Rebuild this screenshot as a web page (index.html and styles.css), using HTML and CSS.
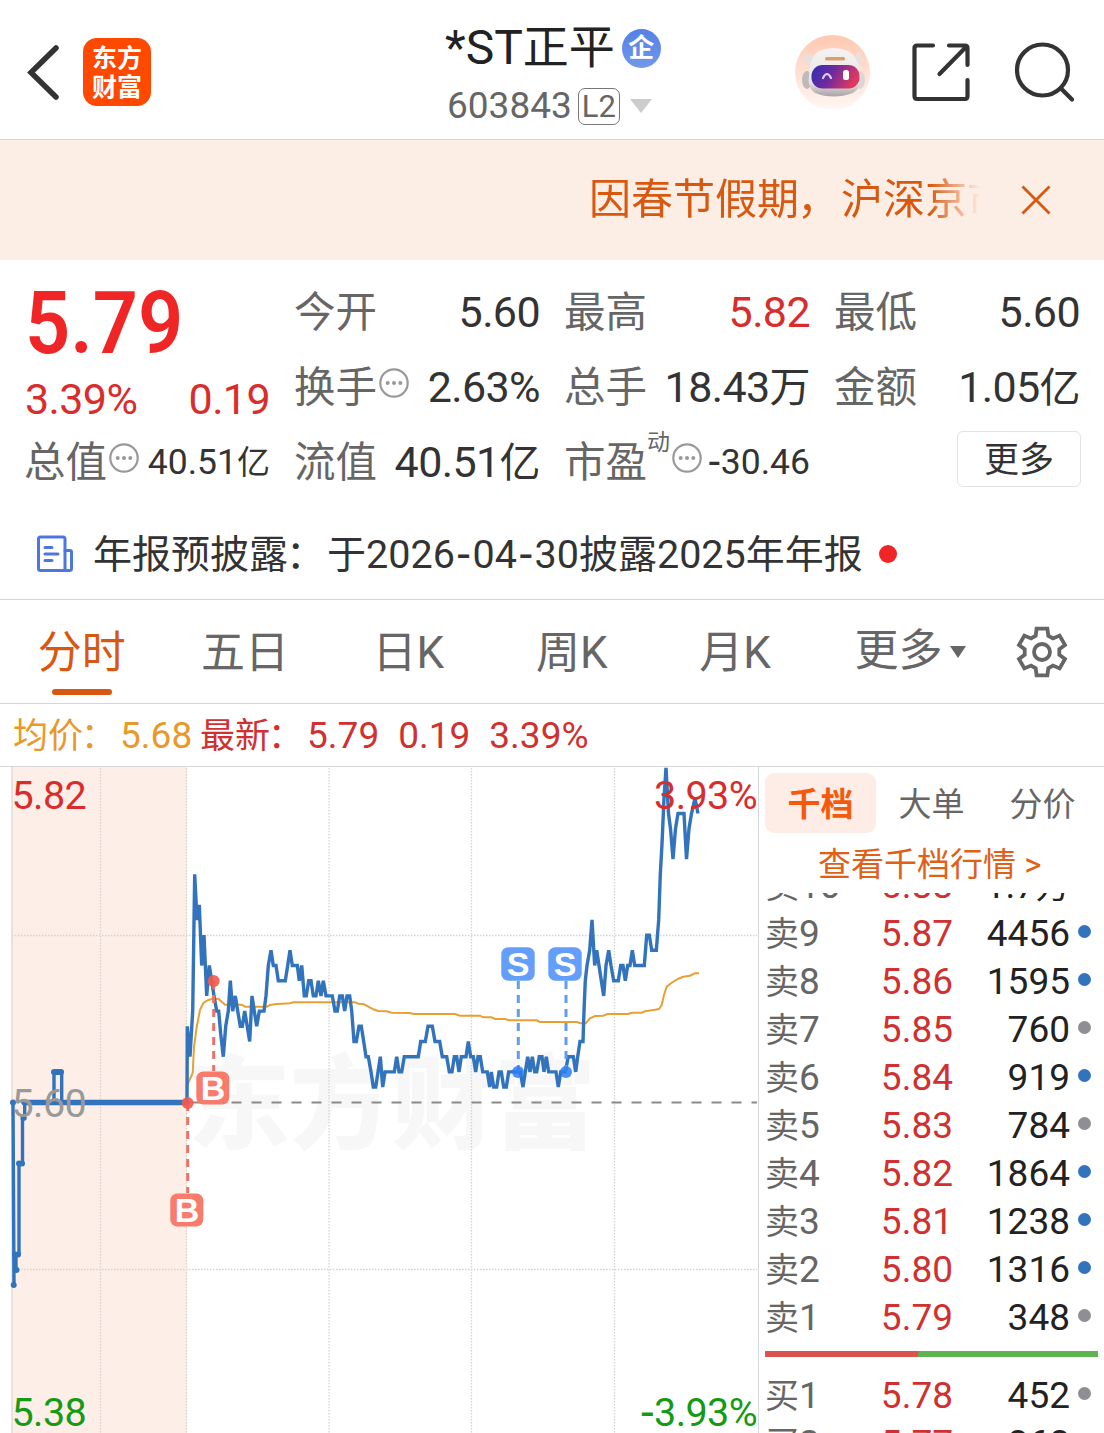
FILE: index.html
```html
<!DOCTYPE html>
<html lang="zh-CN">

<head>
  <meta charset="UTF-8" />
  <meta name="viewport" content="width=device-width, initial-scale=1.0" />
  <title>*ST正平 603843</title>
  <link rel="stylesheet" href="styles.css">
</head>

<body>
  <svg class="defs" width="0" height="0">
    <symbol id="more-info" viewBox="0 0 30 30">
      <circle cx="15" cy="15" r="13.7" fill="none" stroke="#999" stroke-width="2.2" />
      <circle cx="8.7" cy="15" r="2" fill="#999" />
      <circle cx="15" cy="15" r="2" fill="#999" />
      <circle cx="21.3" cy="15" r="2" fill="#999" />
    </symbol>
  </svg>

  <header class="header">
    <div class="header-left">
      <svg class="back" width="40" height="60" viewBox="0 0 40 60">
        <path d="M31 6 L6 30.500 L31 55" fill="none" stroke="#333" stroke-width="5.500" stroke-linecap="round" />
      </svg>
      <div class="logo"><span>东方</span><span>财富</span></div>
    </div>
    <div class="header-title">
      <div class="name">*ST<span class="name-cn">正平</span><i class="badge">企</i></div>
      <div class="code">603843<span class="level">L2</span><i class="arrow"></i></div>
    </div>
    <div class="header-right">
      <svg width="75" height="75" viewBox="0 0 75 75">
        <defs>
          <linearGradient id="avatarBg" x1="0" y1="0" x2="0" y2="1">
            <stop offset="0" stop-color="#ffc8b0" />
            <stop offset="1" stop-color="#fff8f5" />
          </linearGradient>
          <linearGradient id="head" x1="0" y1="0" x2="0" y2="1">
            <stop offset="0" stop-color="#f6f3f3" />
            <stop offset=".7" stop-color="#e9e3e4" />
            <stop offset="1" stop-color="#aaa3a6" />
          </linearGradient>
          <linearGradient id="visor" x1="0" y1="0" x2="1" y2=".3">
            <stop offset="0" stop-color="#2b2fb5" />
            <stop offset=".5" stop-color="#6f2a9e" />
            <stop offset="1" stop-color="#e0385f" />
          </linearGradient>
        </defs>
        <circle cx="37.500" cy="37.500" r="37.500" fill="url(#avatarBg)" />
        <path d="M10 16 Q5 26 15 31 L23 21 Q12 23 10 16Z M63 16 Q70 25 62 31 L52 21 Q62 23 63 16Z" fill="#e8dfdf" />
        <ellipse cx="12" cy="45" rx="5" ry="9" fill="#bfb9bb" />
        <ellipse cx="65" cy="45" rx="5" ry="9" fill="#dcd5d7" />
        <path d="M14 40 Q15 21 24 16 Q38 10 53 16 Q63 21 66 40 Q67 53 58 58 Q38 65 20 58 Q12 53 14 40Z" fill="url(#head)" />
        <rect x="16.500" y="30" width="48" height="23.500" rx="11" fill="url(#visor)" />
        <rect x="30" y="22" width="20" height="3.500" rx="1.500" fill="#dba068" />
        <path d="M28 43 Q32 35 36 43" fill="none" stroke="#d7d2ff" stroke-width="2.200" stroke-linecap="round" />
        <rect x="48" y="35" width="6" height="10" rx="2.500" fill="#fff" />
      </svg>
      <svg width="60" height="60" viewBox="0 0 60 60" fill="none" stroke="#333" stroke-width="4.200" stroke-linecap="round" stroke-linejoin="round">
        <path d="M22 3.500 H6 Q3.500 3.500 3.500 6 V54 Q3.500 57 6 57 H54 Q56.500 57 56.500 54 V38" />
        <path d="M38 3.500 H54 Q56.500 3.500 56.500 6 V23 M55 5 L28.500 32" />
      </svg>
      <svg width="60" height="60" viewBox="0 0 60 60" fill="none" stroke="#333" stroke-width="4.200" stroke-linecap="round">
        <circle cx="28.500" cy="28" r="25.500" />
        <path d="M47 46.500 L58 57.500" />
      </svg>
    </div>
  </header>

  <div class="notice">
    <div class="notice-text">因春节假期<span class="punct">，</span>沪深京市场</div>
    <svg class="notice-close" width="30" height="30" viewBox="0 0 30 30">
      <path d="M1.500 1.500 L28.500 28.500 M28.500 1.500 L1.500 28.500" stroke="#d9580f" stroke-width="2.800" />
    </svg>
  </div>

  <section class="quote">
    <div class="price-box">
      <div class="price"><span>5.79</span></div>
      <div class="change"><span>3.39%</span><span>0.19</span></div>
    </div>
    <div class="stat"><label>今开</label><b>5.60</b></div>
    <div class="stat"><label>最高</label><b class="red">5.82</b></div>
    <div class="stat"><label>最低</label><b>5.60</b></div>
    <div class="stat"><label>换手</label><svg class="info"><use href="#more-info" /></svg><b>2.63%</b></div>
    <div class="stat"><label>总手</label><b>18.43<em>万</em></b></div>
    <div class="stat"><label>金额</label><b>1.05<em>亿</em></b></div>
    <div class="stat"><label>总值</label><svg class="info"><use href="#more-info" /></svg><b class="small">40.51<em>亿</em></b></div>
    <div class="stat"><label>流值</label><b>40.51<em>亿</em></b></div>
    <div class="stat"><label>市盈</label><sup>动</sup><svg class="info"><use href="#more-info" /></svg><b class="small"><span class="dash">-</span>30.46</b></div>
    <div class="more-cell"><button class="more-btn">更多</button></div>
  </section>

  <div class="report">
    <svg width="38" height="38" viewBox="0 0 38 38" fill="none" stroke="#4f76e0" stroke-width="3" stroke-linejoin="round" stroke-linecap="round">
      <path d="M4.500 2 H27 Q29 2 29 4 V35.500 H4.500 Q2.500 35.500 2.500 33.500 V4 Q2.500 2 4.500 2Z" />
      <path d="M29 15.500 H34 Q35.500 15.500 35.500 17 V33.500 Q35.500 35.500 33.500 35.500 H29" />
      <path d="M9 12.500 H16 M9 19 H22 M9 25.500 H16" />
    </svg>
    <p>年报预披露<span class="punct">：</span>于<b>2026<span class="dash">-</span>04<span class="dash">-</span>30</b>披露<b>2025</b>年年报</p>
    <i class="red-dot"></i>
  </div>

  <nav class="tabs">
    <a class="tab active">分时</a>
    <a class="tab">五日</a>
    <a class="tab">日K</a>
    <a class="tab">周K</a>
    <a class="tab">月K</a>
    <a class="tab tab-more">更多<i></i></a>
    <a class="setting">
      <svg width="56" height="56" viewBox="-28 -28 56 56" fill="none" stroke="#666" stroke-width="3.800">
        <path d="M-5.400 -23.400 H5.400 L6.300 -16.300 L11 -13.600 L17.600 -16.400 L23 -7 L17.300 -2.700 V2.700 L23 7 L17.600 16.400 L11 13.600 L6.300 16.300 L5.400 23.400 H-5.400 L-6.300 16.300 L-11 13.600 L-17.600 16.400 L-23 7 L-17.300 2.700 V-2.700 L-23 -7 L-17.600 -16.400 L-11 -13.600 L-6.300 -16.300Z" />
        <circle r="8" />
      </svg>
    </a>
  </nav>

  <div class="legend">
    <span class="avg"><em>均价<span class="punct">：</span></em>5.68</span>
    <span class="last"><em>最新<span class="punct">：</span></em>5.79</span>
    <span class="last">0.19</span>
    <span class="last">3.39%</span>
  </div>

  <main class="main">
    <svg class="chart" width="758" height="666" viewBox="0 767 758 666">
      <rect x="12" y="767" width="175" height="666" fill="#fdeee7" />
      <text class="watermark" x="188" y="1141">东方财富</text>
      <g class="grid">
        <path d="M100.500 768 V1433 M186.500 768 V1433 M329 768 V1433 M471.500 768 V1433 M614.500 768 V1433" />
        <path d="M12 935.500 H757 M12 1269.500 H757" />
      </g>
      <path d="M12 767 V1433" stroke="#dcdcdc" stroke-width="1.500" />
      <path d="M191.500 1102.500 H757" stroke="#8a8a8a" stroke-width="2" stroke-dasharray="10 10" />
      <path id="avgLine" class="avg-line" />
      <path class="pre-line" d="M13 1102 L14 1285 M14 1254 H18 M16 1254 V1270 M19 1254 V1163 H22.500 V1118 H24.700 V1102 H54 V1072 H61.700 V1102" />
      <path d="M24 1102.500 H187" stroke="#3273bd" stroke-width="5.500" stroke-linecap="round" />
      <g fill="#3273bd">
        <circle cx="13" cy="1102.500" r="3" /><circle cx="13.700" cy="1285" r="3" />
        <circle cx="15" cy="1254.500" r="3" /><circle cx="18" cy="1254.500" r="3" /><circle cx="16.500" cy="1270" r="3" />
        <circle cx="19" cy="1163.500" r="3" /><circle cx="22" cy="1163.500" r="3" /><circle cx="23.500" cy="1118" r="3" />
        <rect x="51" y="1069" width="13" height="6" rx="3" />
      </g>
      <path id="priceLine" class="price-line" />
      <g class="mark-buy">
        <path d="M213.700 981 V1071 M187.700 1103 V1193" />
        <circle cx="213.700" cy="981" r="6" /><circle cx="187.700" cy="1103" r="6" />
        <rect x="196.300" y="1071.500" width="33" height="33" rx="7" /><text x="213" y="1100">B</text>
        <rect x="170.300" y="1193.500" width="33" height="33" rx="7" /><text x="187" y="1222">B</text>
      </g>
      <g class="mark-sell">
        <path d="M518.300 981 V1072 M566 981 V1072" />
        <circle cx="518" cy="1072" r="6" /><circle cx="566" cy="1072" r="6" />
        <rect x="501.300" y="947.300" width="33.400" height="33.400" rx="7" /><text x="518" y="976">S</text>
        <rect x="548.300" y="947.300" width="33.400" height="33.400" rx="7" /><text x="565" y="976">S</text>
      </g>
      <g class="axis">
        <text x="11.500" y="809" fill="#d92c2c">5.82</text>
        <text x="11.500" y="1117" fill="#999">5.60</text>
        <text x="11.500" y="1426" fill="#159a15">5.38</text>
        <text x="757" y="809" fill="#d92c2c" text-anchor="end">3.93%</text>
        <text x="757" y="1426" fill="#159a15" text-anchor="end"><tspan class="dash">-</tspan>3.93%</text>
      </g>
    </svg>

    <aside class="book">
      <div class="book-tabs"><a class="on">千档</a><a>大单</a><a>分价</a></div>
      <a class="book-link">查看千档行情 &gt;</a>
      <div class="book-list">
        <div class="row first"><span>卖<u>10</u></span><b>5.88</b><b>1.7<em>万</em></b><i class="none"></i></div>
        <div class="row"><span>卖<u>9</u></span><b>5.87</b><b>4456</b><i class="blue"></i></div>
        <div class="row"><span>卖<u>8</u></span><b>5.86</b><b>1595</b><i class="blue"></i></div>
        <div class="row"><span>卖<u>7</u></span><b>5.85</b><b>760</b><i></i></div>
        <div class="row"><span>卖<u>6</u></span><b>5.84</b><b>919</b><i class="blue"></i></div>
        <div class="row"><span>卖<u>5</u></span><b>5.83</b><b>784</b><i></i></div>
        <div class="row"><span>卖<u>4</u></span><b>5.82</b><b>1864</b><i class="blue"></i></div>
        <div class="row"><span>卖<u>3</u></span><b>5.81</b><b>1238</b><i class="blue"></i></div>
        <div class="row"><span>卖<u>2</u></span><b>5.80</b><b>1316</b><i class="blue"></i></div>
        <div class="row"><span>卖<u>1</u></span><b>5.79</b><b>348</b><i></i></div>
        <div class="ratio"></div>
        <div class="row"><span>买<u>1</u></span><b>5.78</b><b>452</b><i></i></div>
        <div class="row"><span>买<u>2</u></span><b>5.77</b><b>868</b><i></i></div>
      </div>
    </aside>
  </main>

  <script>
    (function () {
      var BASE = 1102.3; // y of the previous close
      var STEP = 15.2; // height of 0.01

      // [x, cents above the previous close]
      var price = [
        [187, 0], [187.3, 5], [190, 3], [192.7, 6], [194.7, 15], [197, 12], [199.3, 13], [201.7, 9], [204, 11],
        [206.7, 7], [209.3, 9], [211.7, 8], [214, 7], [216.7, 6], [218.7, 6], [220.7, 4.5], [223.3, 3], [225.7, 5],
        [228.3, 6], [230.3, 8], [232.7, 6], [235.3, 7], [237.7, 6], [240.3, 5], [242.3, 5], [244.7, 6], [249.7, 4],
        [252, 7], [254.3, 6], [256.7, 5], [259.3, 6], [264, 6], [266, 7], [268.3, 9], [271, 10], [273.3, 9],
        [276, 9], [278.3, 8], [285.3, 8], [287.7, 9], [290, 10], [292.3, 9], [297.3, 9], [299.3, 8], [301.7, 9],
        [304.3, 7], [306.3, 7], [308.7, 8], [311, 8], [313.3, 7], [316, 7], [318.3, 8], [321, 7], [323.3, 8],
        [326, 7], [332.3, 7], [335, 6], [337.3, 6], [339.7, 7], [342.3, 7], [344.7, 6], [347, 7], [349.7, 7],
        [351.7, 6], [354, 4], [356.3, 4], [359, 5], [361.3, 5], [363.7, 4], [366, 3], [368.3, 3], [371, 2],
        [373.3, 1], [375.7, 1], [378, 2], [380.3, 3], [382.7, 1], [385, 2], [394.3, 2], [396.7, 3], [399, 2],
        [401.7, 2], [404.3, 3], [418.3, 3], [420.7, 4], [425.3, 4], [428, 5], [432.3, 5], [435, 4], [439.7, 4],
        [442.3, 3], [446.7, 3], [449.3, 2], [452, 2], [454.3, 3], [456.7, 3], [459, 2], [461.3, 3], [466, 3],
        [468.3, 4], [470.7, 3], [473.3, 3], [475.7, 2], [478, 3], [480.3, 3], [482.7, 2], [487.3, 2], [489.7, 1],
        [491.3, 2], [493.7, 1], [496.7, 1], [499, 2], [501.3, 2], [503.7, 1], [506.3, 1], [508.7, 2], [520.3, 2],
        [523, 1], [525.3, 2], [527.7, 3], [530, 2], [532.3, 3], [534.7, 2], [536.7, 2], [539.3, 3], [542, 3],
        [544, 2], [546.3, 3], [548.7, 2], [556, 2], [558.3, 1], [560.7, 2], [565.3, 2], [568.3, 3], [573.3, 3],
        [575.7, 2], [577.7, 3], [580, 4], [583, 4], [584, 6], [585.3, 8], [587, 9], [589.7, 10], [592, 12],
        [594.7, 9], [596.7, 10], [599, 9], [601.3, 8], [603.7, 7], [606, 9], [608.7, 10], [611, 9], [613.7, 8],
        [618.3, 8], [620.7, 9], [623, 9], [625.3, 8], [627.7, 9], [630, 9], [632.3, 10], [634.7, 9], [644.3, 9],
        [646.7, 11], [649.3, 11], [651.7, 10], [656.3, 10], [658.7, 12], [660.3, 15], [662, 17], [664, 20],
        [666, 22], [668.5, 19], [670.5, 18], [673, 16], [675.5, 18], [678, 19], [684, 19], [686.5, 16],
        [689, 18], [691.5, 19], [695, 20], [698, 19]
      ];

      // [x, y]
      var avg = [
        [187.3, 1085], [192.7, 1073], [194, 1047], [196.7, 1027], [200, 1010], [203.3, 1003], [208.3, 1000],
        [213.3, 998.7], [218.3, 998.7], [221.7, 1001.7], [225, 1004.7], [241.7, 1004.7], [245, 1006.7],
        [266.7, 1006.7], [270, 1005], [276.7, 1004], [290, 1003.3], [293.3, 1002.3], [355, 1002.3], [358.3, 1003.7],
        [363.3, 1004], [368.3, 1006.7], [373.3, 1009.3], [378.3, 1011], [386.7, 1011.3], [391.7, 1012.7],
        [410, 1013], [413.3, 1014], [455, 1014], [460, 1015.7], [480, 1015.7], [483.3, 1017.3], [491.7, 1017.3],
        [495, 1019], [505, 1019], [509, 1020.3], [536.7, 1020.3], [540, 1022], [577.3, 1022], [580, 1023.3],
        [585.7, 1023.3], [590, 1018.3], [595, 1016], [603.3, 1015.7], [607.3, 1014], [628.3, 1014],
        [631.7, 1012.7], [641.7, 1012.7], [645, 1011.3], [655, 1009.7], [659, 1009], [661.7, 1005], [664, 995],
        [666.7, 986.7], [671.7, 982.7], [678.3, 978.7], [683.3, 976.7], [690, 975.7], [695, 973.3], [699, 973.3]
      ];

      function toPath(points) {
        return "M" + points.map(function (p) { return p[0] + " " + p[1].toFixed(1); }).join(" L");
      }

      document.getElementById("avgLine").setAttribute("d", toPath(avg));
      document.getElementById("priceLine").setAttribute("d", toPath(price.map(function (p) {
        return [p[0], BASE - p[1] * STEP];
      })));
    })();
  </script>
</body>

</html>
```

FILE: styles.css
```css
* {
  margin: 0;
  padding: 0;
  box-sizing: border-box;
}

html,
body {
  width: 1104px;
  height: 1433px;
  overflow: hidden;
}

body {
  background: #fff;
  color: #333;
  font-family: Roboto, "Noto Sans CJK SC", sans-serif;
}

i,
em {
  font-style: normal;
}

b {
  font-weight: normal;
}

u {
  text-decoration: none;
}

svg {
  display: block;
  flex: none;
}

.defs {
  position: absolute;
}

.red {
  color: #d92c2c;
}

.punct {
  margin: 0 2px 0 -2px;
}

.dash {
  font-family: "Noto Sans", sans-serif;
  font-size: 1.15em;
  line-height: 0;
}

/* header */
.header {
  display: grid;
  grid-template-columns: 330px 1fr 330px;
  height: 140px;
  border-bottom: 1px solid #d4d4d8;
}

.header-left {
  display: flex;
  align-items: center;
  padding: 5px 0 0 25px;
}

.back {
  margin-right: 18px;
}

.logo {
  display: flex;
  flex-direction: column;
  align-items: center;
  justify-content: center;
  width: 68px;
  height: 68px;
  padding-top: 1px;
  border-radius: 14px;
  background: #ff4800;
  color: #fff;
  font-size: 25px;
  font-weight: bold;
  line-height: 29px;
}

.header-title {
  display: flex;
  flex-direction: column;
  padding: 18px 0 0 115px;
}

.name {
  display: flex;
  align-items: center;
  height: 60px;
  font-size: 48px;
  line-height: 60px;
  color: #222;
}

.name-cn {
  margin-top: -3px;
  font-size: 46px;
}

.badge {
  width: 39px;
  height: 39px;
  margin-left: 7px;
  border-radius: 50%;
  background: linear-gradient(#5580e6, #7099ea);
  color: #fff;
  font-size: 26px;
  font-weight: bold;
  line-height: 38px;
  text-align: center;
}

.code {
  display: flex;
  align-items: center;
  height: 56px;
  padding-left: 2px;
  font-size: 37px;
  line-height: 58px;
  color: #666;
}

.level {
  width: 42px;
  height: 37px;
  margin-left: 6px;
  border: 1.5px solid #777;
  border-radius: 7px;
  font-size: 31px;
  line-height: 35px;
  text-align: center;
}

.arrow {
  margin-left: 10px;
  border: 11px solid transparent;
  border-top: 14px solid #ccc;
  border-bottom: 0;
}

.header-right {
  display: flex;
  align-items: center;
  padding: 5px 0 0 21px;
}

.header-right svg + svg {
  margin-left: 41px;
}

.header-right svg + svg + svg {
  margin-left: 43px;
}

/* notice bar */
.notice {
  display: flex;
  align-items: center;
  height: 120px;
  padding-left: 589px;
  background: #fceee5;
}

.notice-text {
  width: 391px;
  overflow: hidden;
  white-space: nowrap;
  font-size: 42px;
  line-height: 60px;
  color: #d9580f;
  -webkit-mask-image: linear-gradient(90deg, #000 340px, transparent);
  mask-image: linear-gradient(90deg, #000 340px, transparent);
}

.notice-close {
  margin-left: 41px;
}

/* quote */
.quote {
  display: grid;
  grid-template-columns: repeat(4, 245px);
  grid-template-rows: repeat(3, 75px);
  column-gap: 25px;
  padding: 14px 0 0 25px;
}

.price-box {
  grid-row: span 2;
}

.price {
  height: 96px;
  font-size: 88px;
  font-weight: 600;
  line-height: 97px;
  color: #f02525;
}

.price span {
  display: inline-block;
  transform: scaleX(.9);
  transform-origin: 0 50%;
}

.change {
  display: flex;
  justify-content: space-between;
  font-size: 43px;
  letter-spacing: -.6px;
  line-height: 58px;
  color: #d92c2c;
}

.stat {
  display: flex;
  align-items: center;
  height: 75px;
  line-height: 75px;
}

.stat label {
  margin-left: -1px;
  padding-top: 2px;
  font-size: 41.5px;
  color: #666;
}

.stat b {
  margin-left: auto;
  padding-top: 2px;
  font-size: 43px;
  letter-spacing: -.6px;
  white-space: nowrap;
}

.stat b em {
  font-size: 41px;
}

.stat b.small {
  padding-top: 1px;
  font-size: 35.5px;
  letter-spacing: 0;
}

.stat b.small em {
  font-size: 33px;
}

.stat sup {
  align-self: flex-start;
  font-size: 23px;
  line-height: 37px;
  color: #666;
}

.info {
  width: 30px;
  height: 30px;
  margin: 0 0 7px 2px;
}

.more-cell {
  display: flex;
  align-items: center;
  justify-content: flex-end;
}

.more-btn {
  width: 124px;
  height: 56px;
  margin: 0 -1px 5px 0;
  border: 1.5px solid #e3e3e6;
  border-radius: 6px;
  background: #fff;
  color: #333;
  font: 35px/48px "Noto Sans CJK SC", sans-serif;
  padding-bottom: 4px;
}

/* report */
.report {
  display: flex;
  align-items: center;
  height: 101px;
  padding: 9px 0 0 36px;
  border-bottom: 1px solid #d4d4d4;
}

.report p {
  margin-left: 19px;
  padding-top: 2px;
  font-size: 39px;
  line-height: 56px;
  white-space: nowrap;
}

.report p b {
  font-size: 39.5px;
}

.report p .dash {
  margin: 0 1.5px;
}

.red-dot {
  width: 18px;
  height: 18px;
  margin-left: 16px;
  border-radius: 50%;
  background: #f02525;
}

/* tabs */
.tabs {
  display: flex;
  height: 104px;
  border-bottom: 1px solid #d4d4d4;
}

.tab {
  display: flex;
  flex-direction: column;
  align-items: center;
  width: 163.4px;
  font-size: 44px;
  line-height: 107px;
  color: #666;
}

.active {
  color: #d9580f;
}

.active::after {
  content: "";
  width: 60px;
  height: 6px;
  margin-top: -18px;
  border-radius: 3px;
  background: #d9580f;
}

.tab-more {
  flex-direction: row;
  justify-content: center;
  padding-left: 24px;
}

.tab-more i {
  margin-left: 8px;
  border: 8px solid transparent;
  border-top: 12px solid #666;
  border-bottom: 0;
}

.setting {
  display: flex;
  align-items: center;
  justify-content: center;
  width: 124px;
}

/* legend */
.legend {
  display: flex;
  height: 63px;
  padding-left: 13px;
  border-bottom: 1px solid #d4d8d8;
  font-size: 37px;
  line-height: 64px;
  white-space: nowrap;
}

.legend em {
  margin-right: 2px;
  font-size: 35px;
}

.avg {
  width: 187px;
  color: #e8992a;
}

.last {
  margin-right: 19px;
  color: #d03030;
}

/* chart */
.main {
  display: flex;
  height: 666px;
}

.watermark {
  font-family: "Noto Sans CJK SC", sans-serif;
  font-size: 102px;
  font-weight: 900;
  fill: #f7f7f7;
}

.grid path {
  fill: none;
  stroke: #d5d3d2;
  stroke-width: 1.3;
  stroke-dasharray: 1.5 1.5;
}

.price-line,
.pre-line {
  fill: none;
  stroke: #3273bd;
  stroke-width: 3.4;
}

.avg-line {
  fill: none;
  stroke: #e8a035;
  stroke-width: 2;
}

.mark-buy {
  fill: #f97b6b;
}

.mark-buy circle {
  fill: #f2594c;
  fill-opacity: .9;
}

.mark-buy path {
  stroke: #e67468;
  stroke-width: 3;
  stroke-dasharray: 8 6;
}

.mark-sell {
  fill: #629efa;
}

.mark-sell circle {
  fill: #2a7cf5;
  fill-opacity: .85;
}

.mark-sell path {
  stroke: #629ee8;
  stroke-width: 3;
  stroke-dasharray: 8 6;
}

.mark-buy text,
.mark-sell text {
  fill: #fff;
  font-family: "Liberation Sans", sans-serif;
  font-size: 34px;
  font-weight: bold;
  text-anchor: middle;
}

.axis text {
  font-size: 39.5px;
  letter-spacing: -.6px;
}

/* order book */
.book {
  width: 346px;
  border-left: 1px solid #d4d8d8;
  padding: 6px 0 0 6px;
}

.book-tabs {
  display: flex;
  height: 60px;
}

.book-tabs a {
  width: 111px;
  border-radius: 9px;
  font-size: 33px;
  line-height: 64px;
  text-align: center;
  color: #666;
}

.book-tabs .on {
  background: #feede6;
  color: #f55a0c;
  font-weight: bold;
}

.book-link {
  display: block;
  height: 60px;
  padding-left: 53px;
  font-size: 33px;
  line-height: 64px;
  white-space: nowrap;
  color: #e06018;
}

.book-list {
  height: 540px;
  overflow: hidden;
}

.row {
  display: grid;
  grid-template-columns: 74px 114px 117px 20px;
  height: 48px;
  font-size: 37px;
  line-height: 50px;
  color: #222;
}

.row.first {
  margin-top: -32px;
}

.row span {
  font-size: 34px;
  color: #666;
  white-space: nowrap;
}

.row u {
  font-size: 37px;
}

.row b {
  text-align: right;
}

.row b em {
  font-size: 34px;
}

.row span + b {
  color: #d03030;
}

.row i {
  width: 13px;
  height: 13px;
  margin: 16px 0 0 8px;
  border-radius: 50%;
  background: #8e8e93;
}

.row i.blue {
  background: #3273bd;
}

.row i.none {
  background: none;
}

.ratio {
  width: 333px;
  height: 6px;
  margin: 10px 0 14px;
  background: linear-gradient(100deg, #d9534f 151px, #5cb550 152px);
}
```
